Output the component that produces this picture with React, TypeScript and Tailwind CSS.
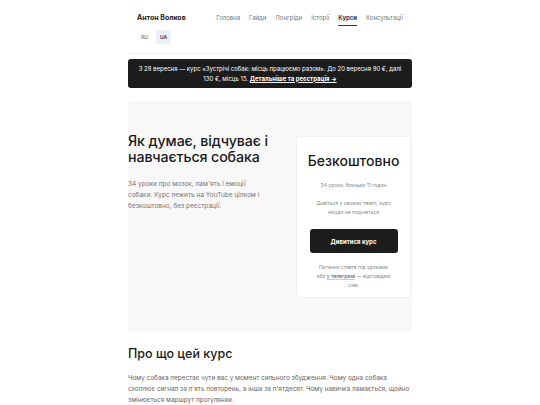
export default function App() {
  const nav = ['Головна', 'Гайди', 'Лонгріди', 'Історії', 'Курси', 'Консультації'];

  return (
    <div className="min-h-[405px] bg-white font-['Inter',sans-serif] text-[#1a1a1a]">
      <div className="mx-auto w-[284px]">
        {/* Header */}
        <header className="px-[9px] pt-[12px]">
          <div className="flex items-start justify-between">
            <span className="pt-[1px] text-[7px] font-bold leading-[10px]">Антон Волков</span>
            <nav className="flex gap-[9px] pt-[1px] text-[6px] leading-[10px] text-[#777]">
              {nav.map((item) => (
                <span
                  key={item}
                  className={
                    item === 'Курси'
                      ? 'border-b-[1.5px] border-[#2e3556] pb-[2px] font-bold text-[#2e3556]'
                      : 'pb-[2px]'
                  }
                >
                  {item}
                </span>
              ))}
            </nav>
          </div>
          <div className="mt-[4px] flex items-center gap-[4px] text-[5px] font-semibold leading-[6px]">
            <span className="px-[4px] py-[4px] text-[#888]">RU</span>
            <span className="rounded-[2px] bg-[#eef0f8] px-[4px] py-[4px] text-[#2e3556]">UA</span>
          </div>
        </header>

        <div className="mt-[9px] border-t border-[#eeeeee]" />

        {/* Banner */}
        <div className="mt-[5px] rounded-[3px] bg-[#1c1c1c] px-[8px] py-[4.5px] text-center text-[6px] leading-[10px] text-white">
          З 28 вересня — курс «Зустрічі собак: місць працюємо разом». До 20 вересня 90 €, далі 130 €, місць 15.{' '}
          <span className="font-bold underline">Детальніше та реєстрація →</span>
        </div>

        {/* Hero */}
        <section className="mt-[13px] flex h-[232px] items-center justify-between rounded-[4px] bg-[#f8f8f8]">
          <div className="w-[150px] self-start pt-[32px]">
            <h1 className="text-[14.2px] font-medium leading-[16px] tracking-[-0.1px]">
              Як думає, відчуває і навчається собака
            </h1>
            <p className="mt-[14px] w-[142px] text-[6.5px] leading-[11px] text-[#777]">
              34 уроки про мозок, пам'ять і емоції собаки. Курс лежить на YouTube цілком і безкоштовно, без реєстрації.
            </p>
          </div>
          <div className="mr-[1px] flex h-[162px] w-[115px] flex-col items-center rounded-[4px] border border-[#f0f0f0] bg-white px-[13px] pt-[16px] text-center">
            <h2 className="text-[14px] font-medium leading-[16px]">Безкоштовно</h2>
            <p className="mt-[12px] text-[5px] leading-[8px] text-[#888]">34 уроки, близько 11 годин</p>
            <p className="mt-[10px] px-[4px] text-[5px] leading-[9px] text-[#888]">
              Дивіться у своєму темпі, курс нікуди не подінеться
            </p>
            <button className="mt-[12px] h-[24px] w-[88px] shrink-0 rounded-[3px] bg-[#1c1c1c] text-[6px] font-bold text-white">
              Дивитися курс
            </button>
            <p className="mt-[10px] px-[4px] text-[5px] leading-[9px] text-[#888]">
              Питання ставте під уроками або{' '}
              <span className="text-[#3b4a8a] underline decoration-[#c5cbe3]">у телеграмі</span> — відповідаю сам.
            </p>
          </div>
        </section>

        {/* About */}
        <section className="pt-[13px]">
          <h2 className="text-[12.5px] font-medium leading-[16px]">Про що цей курс</h2>
          <p className="mt-[11px] text-[6.4px] leading-[11px] text-[#666]">
            Чому собака перестає чути вас у момент сильного збудження. Чому одна собака схоплює сигнал за п'ять повторень, а інша за п'ятдесят. Чому навичка ламається, щойно змінюється маршрут прогулянки.
          </p>
        </section>
      </div>
    </div>
  );
}
